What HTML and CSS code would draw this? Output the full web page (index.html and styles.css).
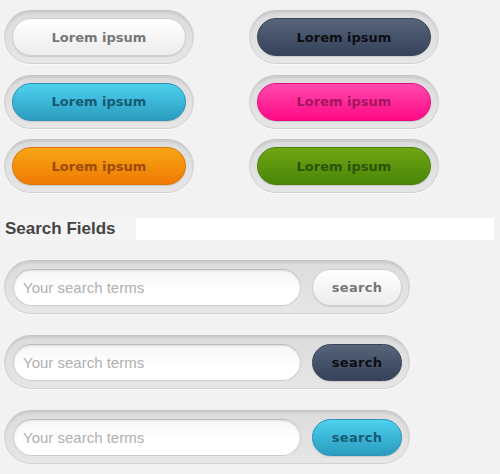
FILE: index.html
```html
<!DOCTYPE html>
<html lang="en">
<head>
  <meta charset="UTF-8" />
  <meta name="viewport" content="width=device-width, initial-scale=1.0" />
  <title>Buttons and Search Fields</title>
  <link rel="stylesheet" href="styles.css">
</head>
<body>

  <section class="buttons">
    <div class="well"><button class="btn white">Lorem ipsum</button></div>
    <div class="well"><button class="btn dark">Lorem ipsum</button></div>
    <div class="well"><button class="btn blue">Lorem ipsum</button></div>
    <div class="well"><button class="btn pink">Lorem ipsum</button></div>
    <div class="well"><button class="btn orange">Lorem ipsum</button></div>
    <div class="well"><button class="btn green">Lorem ipsum</button></div>
  </section>

  <div class="section-title">
    <h2>Search Fields</h2>
    <div class="title-bar"></div>
  </div>

  <section class="searches">
    <form class="search-well">
      <input type="text" placeholder="Your search terms" />
      <button type="button" class="btn search white">search</button>
    </form>
    <form class="search-well">
      <input type="text" placeholder="Your search terms" />
      <button type="button" class="btn search dark">search</button>
    </form>
    <form class="search-well">
      <input type="text" placeholder="Your search terms" />
      <button type="button" class="btn search blue">search</button>
    </form>
  </section>

</body>
</html>
```

FILE: styles.css
```css
* {
  margin: 0;
  padding: 0;
  box-sizing: border-box;
}

body {
  background-color: #f2f2f2;
  font-family: 'DejaVu Sans', sans-serif;
}

/* Buttons grid */
.buttons {
  display: grid;
  grid-template-columns: 190px 190px;
  column-gap: 55px;
  row-gap: 10.5px;
  padding: 10px 0 0 4px;
}

.well,
.search-well {
  height: 54px;
  border-radius: 27px;
  background: linear-gradient(#dcdcdc, #e6e6e6);
  border: 1px solid #d2d2d2;
  border-top-color: #c4c4c4;
  box-shadow: inset 0 2px 2px rgba(0, 0, 0, 0.08), 0 1px 0 #fafafa;
  padding: 7px;
}

.btn {
  display: block;
  width: 100%;
  height: 38px;
  border-radius: 19px;
  border: 1px solid transparent;
  font-family: 'DejaVu Sans', sans-serif;
  font-weight: bold;
  font-size: 13px;
  cursor: pointer;
  box-shadow: 0 1px 1px rgba(0, 0, 0, 0.12);
}

.btn.white {
  background: linear-gradient(#ffffff, #ececec);
  border-color: #d0d0d0;
  color: #777;
}

.btn.dark {
  background: linear-gradient(#56647a, #35425a);
  border-color: #3a4558;
  color: #0e0e12;
}

.btn.blue {
  background: linear-gradient(#4dd1ee, #2a9cbf);
  border-color: #2a93b6;
  color: #175a73;
}

.btn.pink {
  background: linear-gradient(#ff4aad, #ff0a86);
  border-color: #e8097c;
  color: #a4155f;
}

.btn.orange {
  background: linear-gradient(#f7a615, #ef7a02);
  border-color: #e07300;
  color: #9c4a07;
}

.btn.green {
  background: linear-gradient(#6fa613, #4a8609);
  border-color: #477f0a;
  color: #2b5306;
}

/* Section title */
.section-title {
  display: flex;
  align-items: stretch;
  height: 22px;
  margin: 25px 6px 0 3px;
}

.section-title h2 {
  width: 133px;
  padding-left: 2px;
  font-family: 'Liberation Sans', Arial, sans-serif;
  font-size: 17px;
  line-height: 22px;
  color: #444;
  background-color: #f4f4f4;
}

.title-bar {
  flex: 1;
  background-color: #fff;
}

/* Search fields */
.searches {
  display: flex;
  flex-direction: column;
  gap: 21px;
  padding: 20px 0 0 4px;
}

.search-well {
  width: 406px;
  display: flex;
  align-items: center;
  gap: 11px;
  padding: 0 7px 0 8px;
}

.search-well input {
  width: 288px;
  height: 37px;
  border-radius: 19px;
  border: 1px solid #cdcdcd;
  border-top-color: #bdbdbd;
  background: linear-gradient(#f6f6f6, #ffffff 60%);
  box-shadow: inset 0 1px 2px rgba(0, 0, 0, 0.1);
  padding: 0 9px;
  font-family: 'Liberation Sans', Arial, sans-serif;
  font-size: 15px;
  color: #555;
  outline: none;
}

.search-well input::placeholder {
  color: #b0b0b0;
}

.btn.search {
  width: 90px;
  height: 37px;
  letter-spacing: 0.3px;
}
```
